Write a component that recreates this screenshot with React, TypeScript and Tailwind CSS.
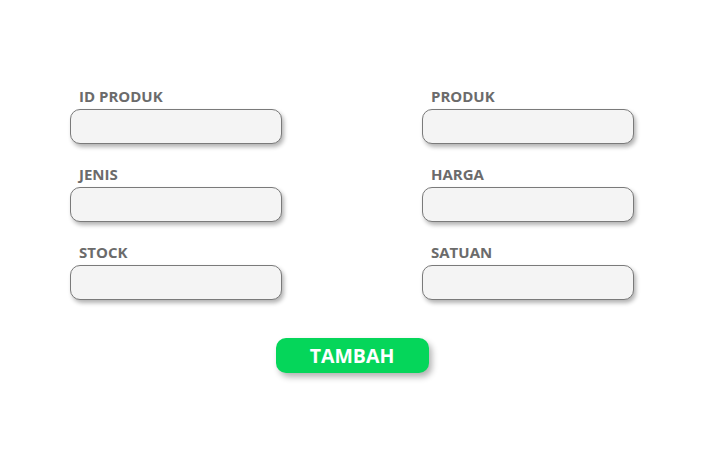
export default function App() {
  const fields = ["ID PRODUK", "PRODUK", "JENIS", "HARGA", "STOCK", "SATUAN"];
  return (
    <div className="min-h-[459px] w-[704px] bg-white pt-[87px] font-['Open_Sans',sans-serif]">
      <div className="ml-[70px] grid w-[564px] grid-cols-[212px_212px] justify-between gap-y-[21px]">
        {fields.map((label) => (
          <div key={label} className="flex flex-col gap-[4px]">
            <label className="pl-[9px] text-[15px] leading-[18px] font-bold text-[#6b6b6b]">{label}</label>
            <input
              type="text"
              className="h-[35px] w-[212px] rounded-[10px] border border-[#7a7a7a] bg-[#f4f4f4] shadow-[2px_3px_4px_rgba(0,0,0,0.3)] outline-none"
            />
          </div>
        ))}
      </div>
      <div className="mt-[38px] flex justify-center">
        <button className="h-[35px] w-[153px] rounded-[10px] bg-[#05d65a] pt-[1px] text-[19.5px] font-bold text-white shadow-[3px_4px_6px_rgba(0,0,0,0.3)]">
          TAMBAH
        </button>
      </div>
    </div>
  );
}
